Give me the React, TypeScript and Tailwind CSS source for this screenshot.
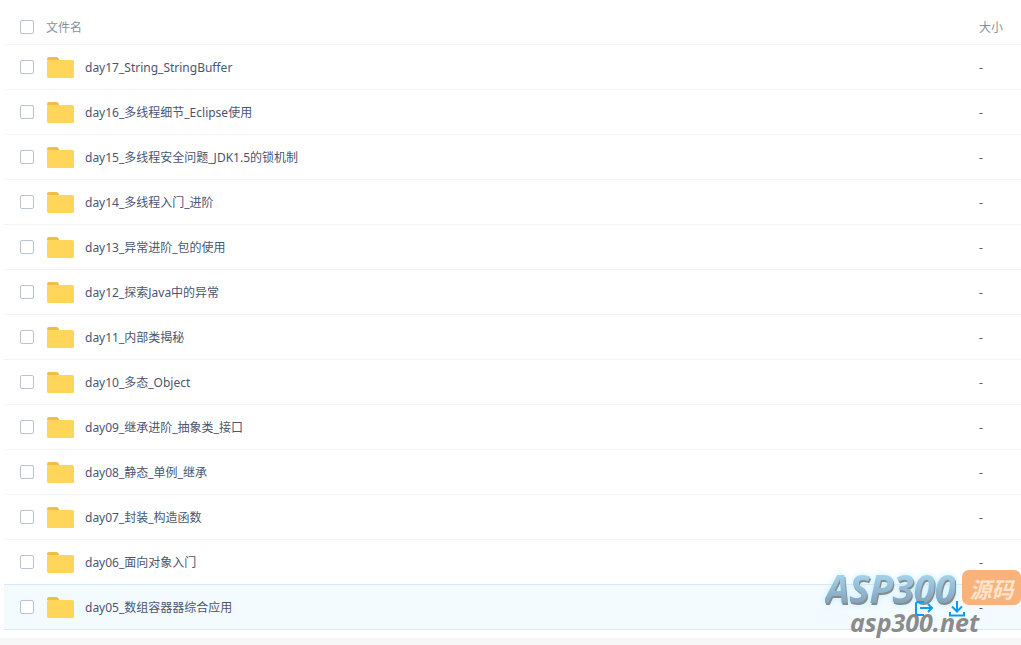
const files = [
  "day17_String_StringBuffer",
  "day16_多线程细节_Eclipse使用",
  "day15_多线程安全问题_JDK1.5的锁机制",
  "day14_多线程入门_进阶",
  "day13_异常进阶_包的使用",
  "day12_探索Java中的异常",
  "day11_内部类揭秘",
  "day10_多态_Object",
  "day09_继承进阶_抽象类_接口",
  "day08_静态_单例_继承",
  "day07_封装_构造函数",
  "day06_面向对象入门",
  "day05_数组容器器综合应用",
];

const Checkbox = () => (
  <span className="block h-[14px] w-[14px] rounded-[2px] border border-[#b8c4d4] bg-white" />
);

const FolderIcon = () => (
  <svg width="27" height="21" viewBox="0 0 27 21" className="block">
    <path d="M0 2a2 2 0 0 1 2-2h7a3 3 0 0 1 3 3H0z" fill="#efbd4a" />
    <rect x="0" y="3" width="27" height="18" rx="1.5" fill="#ffd659" />
  </svg>
);

function Row({ name, active }: { name: string; active: boolean }) {
  return (
    <div
      className={
        active
          ? "mt-[-1px] flex h-[46px] items-center border-y border-[#d5e9f8] bg-[#f4fbff]"
          : "flex h-[45px] items-center border-b border-[#f2f4f6]"
      }
    >
      <div className="flex w-[46px] justify-center">
        <Checkbox />
      </div>
      <div className="ml-[-3px] h-[22px] w-[27px] pt-[1px]">
        <FolderIcon />
      </div>
      <div className="ml-[11px] flex-1 pt-[2px] text-[12px] text-[#4a5670]">{name}</div>
      <div className="w-[42px] pt-[2px] text-[12px] text-[#4a5670]">-</div>
    </div>
  );
}

function Watermark() {
  return (
    <div className="absolute left-[825px] top-[566px] h-[72px] w-[196px]">
      <div className="absolute left-0 top-0 flex items-start">
        <span className="bg-gradient-to-b from-[#aee2fb] to-[#7d98b0] bg-clip-text text-[39px] leading-[44px] font-bold italic tracking-[-0.5px] text-transparent [font-family:'Open_Sans',sans-serif] [filter:drop-shadow(1px_2px_0_#8a8a8a)_drop-shadow(0_0_3px_#bdeeff)]">
          ASP300
        </span>
      </div>
      <div className="absolute left-[137px] top-[4px] flex h-[35px] w-[59px] items-center justify-center rounded-[7px] bg-[#f8b27c] text-[22px] leading-none font-bold italic text-[#fde3cc] [font-family:'Noto_Sans_CJK_SC',sans-serif]">
        源码
      </div>
      <div className="absolute left-[25px] top-[41px] text-[25px] leading-[30px] font-bold italic text-[#8b8b8b] [font-family:'Open_Sans',sans-serif]">
        asp300.net
      </div>
    </div>
  );
}

export default function App() {
  return (
    <div className="relative h-[645px] w-[1021px] overflow-hidden bg-white [font-family:'Noto_Sans','Noto_Sans_CJK_SC',sans-serif]">
      <div className="pl-[4px]">
        <div className="flex h-[45px] items-center border-b border-[#f2f4f6] pt-[9px]">
          <div className="flex w-[46px] justify-center">
            <Checkbox />
          </div>
          <div className="ml-[-4px] flex-1 pt-[2px] text-[12px] text-[#8a8f99]">文件名</div>
          <div className="w-[42px] pt-[2px] text-[12px] text-[#8a8f99]">大小</div>
        </div>
        {files.map((name, i) => (
          <Row key={name} name={name} active={i === files.length - 1} />
        ))}
      </div>
      <div className="mt-[8px] h-[20px] bg-[#f7f7f7]" />
      <Watermark />
      <div className="absolute left-[915px] top-[600px] flex items-center gap-[15px] text-[#0a9cf5]">
        <svg width="19" height="17" viewBox="0 0 19 17" fill="none" stroke="currentColor" strokeWidth="2">
          <path d="M9 2H3a2 2 0 0 0-2 2v9a2 2 0 0 0 2 2h6" />
          <path d="M5 8h12M13 4l4 4-4 4" />
        </svg>
        <svg width="16" height="17" viewBox="0 0 16 17" fill="none" stroke="currentColor" strokeWidth="2">
          <path d="M8 1v10M3 6.5l5 5 5-5" />
          <path d="M1 12v3.5h14V12" />
        </svg>
      </div>
    </div>
  );
}
